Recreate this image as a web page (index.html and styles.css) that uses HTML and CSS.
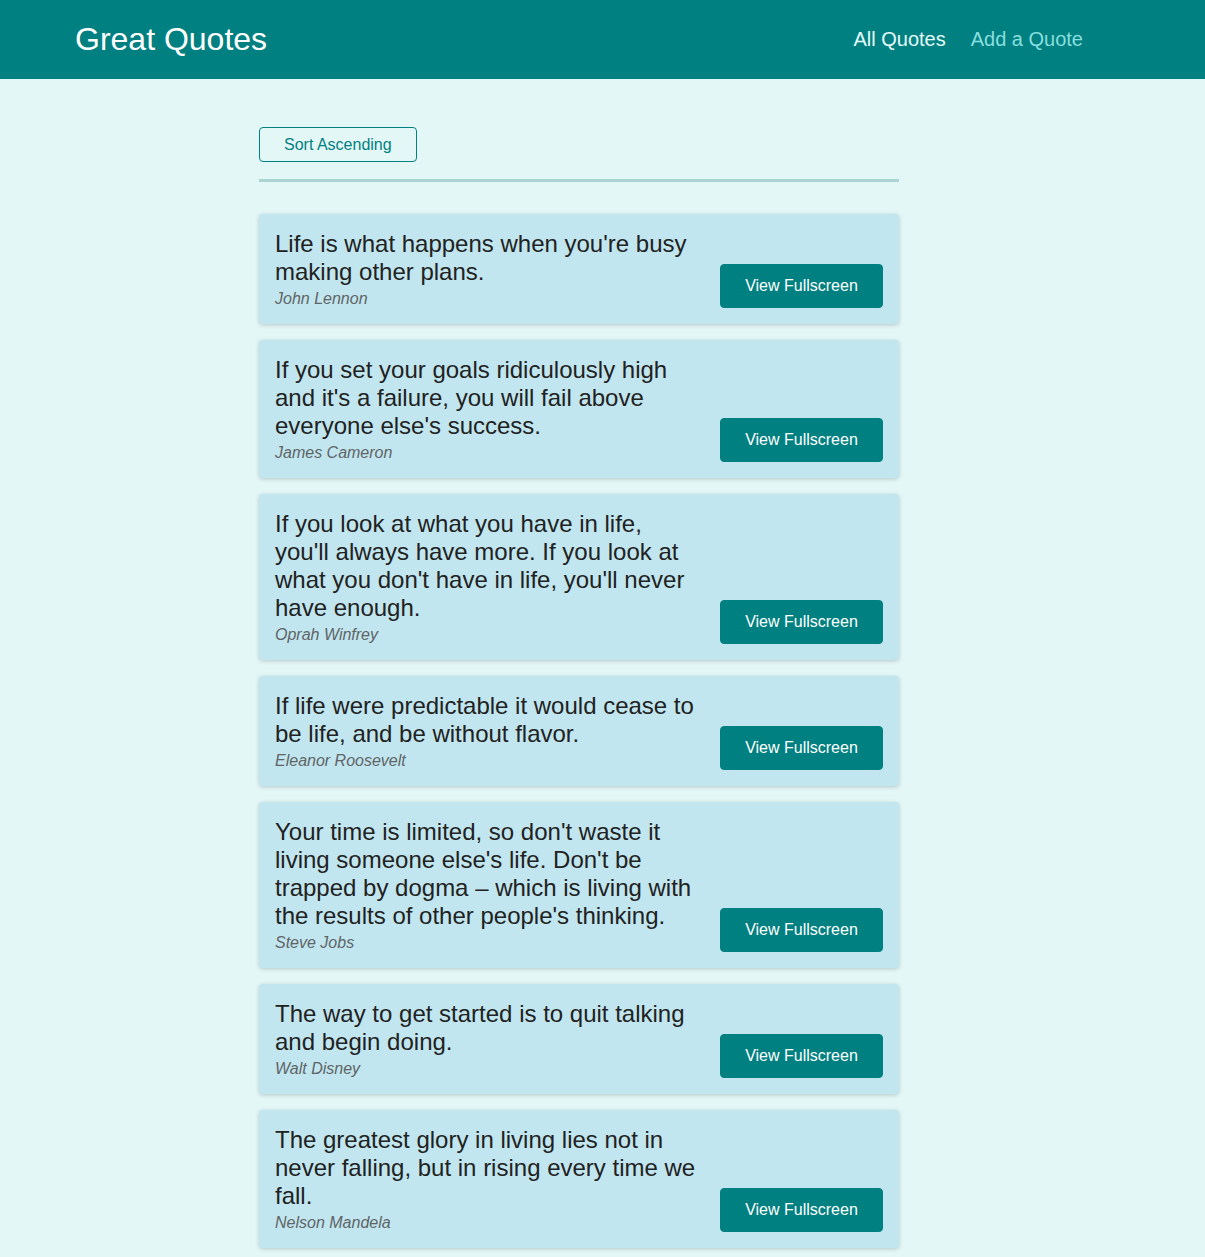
FILE: index.html
```html
<!DOCTYPE html>
<html lang="en">
<head>
<meta charset="utf-8">
<title>Great Quotes</title>
<link rel="stylesheet" href="styles.css">
</head>
<body>
<header class="header">
  <div class="logo">Great Quotes</div>
  <nav class="nav">
    <a class="nav-link active" href="#">All Quotes</a>
    <a class="nav-link" href="#">Add a Quote</a>
  </nav>
</header>
<main class="main">
  <div class="sorting">
    <button class="sort-btn">Sort Ascending</button>
  </div>
  <ul class="list">
    <li class="item">
      <figure class="quote">
        <blockquote class="text">Life is what happens when you're busy making other plans.</blockquote>
        <figcaption class="author">John Lennon</figcaption>
      </figure>
      <a class="btn" href="#">View Fullscreen</a>
    </li>
    <li class="item">
      <figure class="quote">
        <blockquote class="text">If you set your goals ridiculously high and it's a failure, you will fail above everyone else's success.</blockquote>
        <figcaption class="author">James Cameron</figcaption>
      </figure>
      <a class="btn" href="#">View Fullscreen</a>
    </li>
    <li class="item">
      <figure class="quote">
        <blockquote class="text">If you look at what you have in life, you'll always have more. If you look at what you don't have in life, you'll never have enough.</blockquote>
        <figcaption class="author">Oprah Winfrey</figcaption>
      </figure>
      <a class="btn" href="#">View Fullscreen</a>
    </li>
    <li class="item">
      <figure class="quote">
        <blockquote class="text">If life were predictable it would cease to be life, and be without flavor.</blockquote>
        <figcaption class="author">Eleanor Roosevelt</figcaption>
      </figure>
      <a class="btn" href="#">View Fullscreen</a>
    </li>
    <li class="item">
      <figure class="quote">
        <blockquote class="text">Your time is limited, so don't waste it living someone else's life. Don't be trapped by dogma – which is living with the results of other people's thinking.</blockquote>
        <figcaption class="author">Steve Jobs</figcaption>
      </figure>
      <a class="btn" href="#">View Fullscreen</a>
    </li>
    <li class="item">
      <figure class="quote">
        <blockquote class="text">The way to get started is to quit talking and begin doing.</blockquote>
        <figcaption class="author">Walt Disney</figcaption>
      </figure>
      <a class="btn" href="#">View Fullscreen</a>
    </li>
    <li class="item">
      <figure class="quote">
        <blockquote class="text">The greatest glory in living lies not in never falling, but in rising every time we fall.</blockquote>
        <figcaption class="author">Nelson Mandela</figcaption>
      </figure>
      <a class="btn" href="#">View Fullscreen</a>
    </li>
  </ul>
</main>
</body>
</html>
```

FILE: styles.css
```css
* {
  box-sizing: border-box;
}

body {
  margin: 0;
  font-family: "Liberation Sans", Arial, sans-serif;
  background: #e4f7f7;
  color: #222;
}

.header {
  height: 79px;
  background: #008080;
  display: flex;
  align-items: center;
  justify-content: space-between;
  padding: 0 122px 0 75px;
}

.logo {
  color: #ffffff;
  font-size: 32px;
}

.nav {
  display: flex;
  gap: 25px;
}

.nav-link {
  font-size: 20px;
  color: #88dfdf;
  text-decoration: none;
}

.nav-link.active {
  color: #e6fcfc;
}

.main {
  width: 640px;
  margin: 48px 0 0 259px;
}

.sorting {
  padding-bottom: 17px;
  border-bottom: 3px solid #acd4d4;
}

.sort-btn {
  font-family: "Liberation Sans", Arial, sans-serif;
  font-size: 16px;
  line-height: 19px;
  color: #008080;
  background: transparent;
  border: 1px solid #008080;
  border-radius: 4px;
  padding: 7px 24px;
  height: 35px;
  display: block;
}

.list {
  list-style: none;
  margin: 32px 0 0;
  padding: 0;
}

.item {
  background: #c1e6ef;
  border-radius: 4px;
  box-shadow: 0 1px 4px rgba(0, 0, 0, 0.2);
  margin-bottom: 16px;
  padding: 16px;
  display: flex;
  align-items: flex-end;
  justify-content: space-between;
}

.quote {
  margin: 0;
  flex: 1;
  margin-right: 21px;
}

.text {
  margin: 0 0 4px;
  font-size: 24px;
  line-height: 28px;
  color: #222;
}

.author {
  font-style: italic;
  font-size: 16px;
  line-height: 18px;
  color: #5f6466;
}

.btn {
  flex: none;
  display: block;
  background: #008080;
  color: #ffffff;
  border: 1px solid #008080;
  border-radius: 4px;
  text-decoration: none;
  font-size: 16px;
  line-height: 18px;
  padding: 12px 24px;
  width: 163px;
  height: 44px;
  text-align: center;
}
```
